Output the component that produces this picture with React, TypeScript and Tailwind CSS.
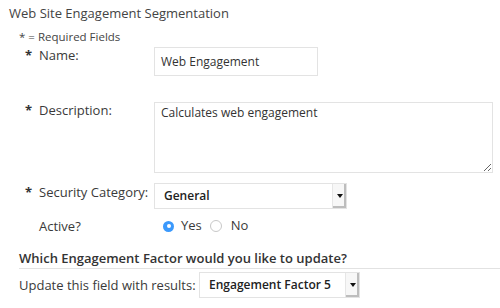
function Star({ show = true }: { show?: boolean }) {
  return <span className="inline-block w-[14px] text-[13px] font-bold leading-[18px] text-[#333]">{show ? '*' : ''}</span>
}

function SelectBox({ value, className }: { value: string; className: string }) {
  return (
    <div className={`flex items-stretch border border-[#e3e3e3] bg-white ${className}`}>
      <span className="flex flex-1 items-center pl-[9px] text-[12px] font-semibold text-[#222]">{value}</span>
      <span className="flex w-[14px] items-center justify-center border-l border-[#e6e6e6] bg-[#f7f7f7] shadow-[inset_-2px_-2px_0_#bdbdbd]">
        <svg width="6" height="4" viewBox="0 0 6 4">
          <path d="M0 0h6L3 4z" fill="#111" />
        </svg>
      </span>
    </div>
  )
}

export default function App() {
  return (
    <main className="flex h-[308px] w-[500px] flex-col overflow-hidden bg-white font-['Open_Sans',sans-serif] text-[#3a3a3a]">
      <h1 className="pl-[9px] pt-[4px] text-[13px] leading-[18px] text-[#444]">Web Site Engagement Segmentation</h1>
      <p className="mt-[8px] pl-[19px] text-[11.5px] leading-[14px] text-[#444]">* = Required Fields</p>

      <div className="mt-[3px] flex items-start">
        <div className="mt-[-1px] flex w-[154px] items-start pl-[25px]">
          <Star />
          <span className="text-[13px] leading-[18px]">Name:</span>
        </div>
        <div className="flex h-[29px] w-[164px] items-center border border-[#e3e3e3] pl-[6px] text-[12px] text-[#333]">
          Web Engagement
        </div>
      </div>

      <div className="mt-[26px] flex items-start">
        <div className="mt-[-1px] flex w-[154px] items-start pl-[25px]">
          <Star />
          <span className="text-[13px] leading-[18px]">Description:</span>
        </div>
        <textarea
          readOnly
          defaultValue="Calculates web engagement"
          className="block h-[71px] w-[339px] border border-[#e3e3e3] px-[6px] py-[1px] text-[12px] leading-[18px] text-[#333] outline-none"
        />
      </div>

      <div className="mt-[10px] flex items-start">
        <div className="flex w-[154px] items-start pl-[25px]">
          <Star />
          <span className="text-[13px] leading-[18px]">Security Category:</span>
        </div>
        <SelectBox value="General" className="h-[26px] w-[193px]" />
      </div>

      <div className="mt-[6px] flex h-[22px] items-center">
        <div className="flex w-[163px] items-center pl-[25px]">
          <Star show={false} />
          <span className="text-[13px] leading-[18px]">Active?</span>
        </div>
        <span className="flex h-[11px] w-[11px] items-center justify-center rounded-full bg-[#3b99fc]">
          <span className="h-[4px] w-[4px] rounded-full bg-white" />
        </span>
        <span className="ml-[7px] text-[13px]">Yes</span>
        <span className="ml-[8px] h-[12px] w-[12px] rounded-full border border-[#c8c8c8] bg-white" />
        <span className="ml-[9px] text-[13px]">No</span>
      </div>

      <div className="ml-[19px] mt-[12px] border-b border-[#e2e2e2] pb-[1px]">
        <h2 className="text-[13px] font-semibold leading-[18px] text-[#333]">Which Engagement Factor would you like to update?</h2>
      </div>

      <div className="mt-[3px] flex items-center pl-[19px]">
        <span className="w-[180px] text-[13px] leading-[18px]">Update this field with results:</span>
        <SelectBox value="Engagement Factor 5" className="h-[26px] w-[161px]" />
      </div>
    </main>
  )
}
